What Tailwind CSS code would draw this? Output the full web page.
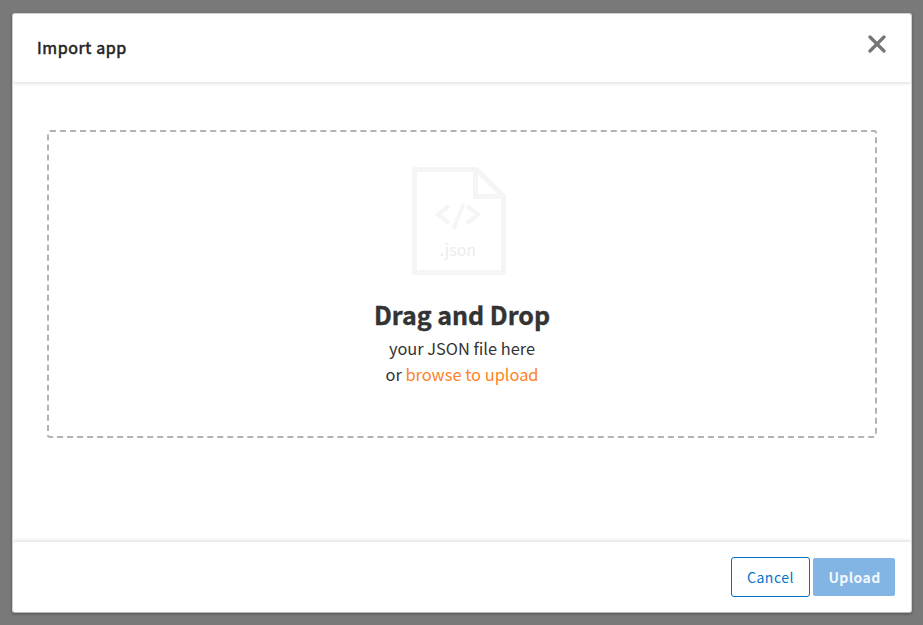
<!DOCTYPE html>
<html lang="en">
<head>
<meta charset="utf-8">
<title>Import app</title>
<script src="https://cdn.jsdelivr.net/npm/@tailwindcss/browser@4"></script>
</head>
<body class="h-[625px] overflow-hidden bg-[#797979] pt-[13px] pl-3 text-[#333] font-['Noto_Sans_CJK_SC','Noto_Sans_CJK_JP',sans-serif]">
<div role="dialog" class="flex h-[600px] w-[900px] flex-col overflow-hidden rounded-[3px] border border-[#d0d0d0] border-b-[#b5b9b8] bg-white shadow-[0_1px_3px_rgba(0,0,0,0.35)]">
  <header class="flex h-[68px] shrink-0 items-start justify-between rounded-b-[3px] pl-6 pr-[25px] shadow-[0_1px_4px_rgba(0,0,0,0.16)]">
    <h1 class="mt-[21px] text-[16px] leading-6 font-normal tracking-[0.6px] text-[#222] [-webkit-text-stroke:0.55px_#222]">Import app</h1>
    <button aria-label="Close" class="mt-[21px]"><svg class="block h-[18px] w-[18px]" viewBox="0 0 18 18" fill="none" stroke="#757575" stroke-width="3.200" stroke-linecap="round"><path d="M2 2L16 16M16 2L2 16"/></svg></button>
  </header>
  <main class="flex-1 px-[34px] pt-[48px]">
    <section class="flex h-[308px] flex-col items-center rounded-[3px] border-2 border-dashed border-[#b3b3b3] pt-[35px]">
      <svg class="mr-[6px] block h-[108px] w-[94px]" viewBox="0 0 94 108" fill="none" stroke="#f5f5f5">
        <path d="M2.5 2.5H64.5L91.500 29.500V105.500H2.500Z" stroke-width="5" stroke-linejoin="round"/>
        <path d="M63.500 3V29.500H91" stroke-width="5"/>
        <path d="M37 39L26 47.500L37 56M55 39L66 47.500L55 56" stroke-width="4.200"/>
        <path d="M51.500 37L41.500 62" stroke-width="3.800"/>
        <text x="46" y="89" text-anchor="middle" fill="#ececec" stroke="none" class="text-[16px]">.json</text>
      </svg>
      <h2 class="mt-[23px] text-[25px] leading-[32px] font-bold [-webkit-text-stroke:0.4px_#333]">Drag and Drop</h2>
      <p class="mt-[5px] text-center text-[16.4px] leading-[26px]">your JSON file here<br>or <a class="text-[#fd841f]">browse to upload</a></p>
    </section>
  </main>
  <footer class="flex h-[70px] shrink-0 items-start justify-end gap-[3px] rounded-t-[3px] pt-[15px] pr-[16px] shadow-[0_-1px_4px_rgba(0,0,0,0.16)]">
    <button class="h-[40px] w-[79px] rounded-[3px] border border-[#006fc6] text-[14px] tracking-[0.5px] text-[#0075c9]">Cancel</button>
    <button class="mt-px h-[38px] w-[82px] rounded-[2px] bg-[#82b4e4] pl-px text-[14px] font-bold tracking-[0.4px] text-[#f2f7fc]">Upload</button>
  </footer>
</div>
</body>
</html>
